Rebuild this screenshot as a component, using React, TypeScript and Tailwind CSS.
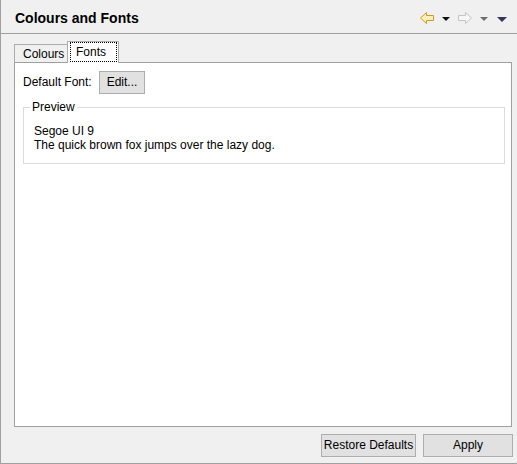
import React from "react";

const font = { fontFamily: '"Liberation Sans", Arial, sans-serif' };

function BackArrow({ stroke, fill }: { stroke: string; fill: string }) {
  return (
    <svg width="16" height="12" viewBox="0 0 16 12" className="mt-[12px] block">
      <polygon
        points="1.5,6 7.5,0.5 7.5,3.5 14.5,3.5 14.5,8.5 7.5,8.5 7.5,11.5"
        fill={fill}
        stroke={stroke}
        strokeWidth="1"
        strokeLinejoin="miter"
      />
    </svg>
  );
}

function FwdArrow({ stroke, fill }: { stroke: string; fill: string }) {
  return (
    <svg width="16" height="12" viewBox="0 0 16 12" className="mt-[12px] block">
      <polygon
        points="14.5,6 8.5,0.5 8.5,3.5 1.5,3.5 1.5,8.5 8.5,8.5 8.5,11.5"
        fill={fill}
        stroke={stroke}
        strokeWidth="1"
      />
    </svg>
  );
}

function Tri({ color, w, h }: { color: string; w: number; h: number }) {
  return (
    <svg width={w} height={h} viewBox={`0 0 ${w} ${h}`} className="mt-[17px] block">
      <polygon points={`0,0 ${w},0 ${w / 2},${h}`} fill={color} />
    </svg>
  );
}

export default function App() {
  return (
    <div
      style={font}
      className="w-[517px] h-[464px] bg-[#f0f0f0] border-l border-b border-[#a0a0a0] flex flex-col text-[12px] text-black"
    >
      {/* header */}
      <div className="h-[34px] shrink-0 border-b border-[#a0a0a0] flex items-start">
        <div className="ml-[14px] mt-[10px] leading-[16px] text-[14px] font-bold">Colours and Fonts</div>
        <div className="ml-auto flex items-start pr-[10px]">
          <BackArrow stroke="#d09a28" fill="#fdefb8" />
          <div className="ml-[7px]">
            <Tri color="#111111" w={8} h={4} />
          </div>
          <div className="ml-[7px]">
            <FwdArrow stroke="#c4c4c4" fill="#f6f6f6" />
          </div>
          <div className="ml-[7px]">
            <Tri color="#6e6e6e" w={8} h={4} />
          </div>
          <div className="ml-[9px]">
            <Tri color="#34345f" w={10} h={5} />
          </div>
        </div>
      </div>

      {/* body */}
      <div className="flex-1 flex flex-col pl-[13px] pr-[5px] mt-[7px]">
        {/* tabs */}
        <div className="h-[21px] flex items-end shrink-0">
          <div className="w-[53px] h-[18px] border-l border-t border-[#adadad] bg-[#f0f0f0] pl-[8px] pt-[1px] flex items-center leading-[15px]">
            Colours
          </div>
          <div className="w-[52px] h-[22px] border-l border-t border-r border-[#adadad] bg-white mb-[-1px] relative z-10">
            <div className="ml-[2px] w-[47px] h-[20px] border border-dotted border-black flex items-center pl-[5px] leading-[15px]">
              Fonts
            </div>
          </div>
        </div>

        {/* panel */}
        <div className="h-[365px] shrink-0 bg-white border border-[#a0a0a0] pl-[8px] pr-[6px] pt-[8px]">
          <div className="flex items-center h-[23px]">
            <div className="w-[76px] leading-[15px]">Default Font:</div>
            <button className="w-[46px] h-[23px] bg-[#e1e1e1] border border-[#adadad] leading-[15px] text-[12px]">
              Edit...
            </button>
          </div>
          <fieldset className="mt-[6px] border border-[#dcdcdc] pl-[6px] pt-[9px] pb-[11px] min-w-0">
            <legend className="px-[2px] leading-[15px]">Preview</legend>
            <div className="pl-[4px] leading-[14px]">
              <div>Segoe UI 9</div>
              <div>The quick brown fox jumps over the lazy dog.</div>
            </div>
          </fieldset>
        </div>

        {/* buttons */}
        <div className="mt-[7px] mb-[6px] h-[23px] flex justify-end mr-[-1px] gap-[7px] shrink-0">
          <button className="w-[95px] h-[23px] bg-[#e1e1e1] border border-[#adadad] leading-[15px] text-[12px]">
            Restore Defaults
          </button>
          <button className="w-[90px] h-[23px] bg-[#e1e1e1] border border-[#adadad] leading-[15px] text-[12px]">
            Apply
          </button>
        </div>
      </div>
    </div>
  );
}
